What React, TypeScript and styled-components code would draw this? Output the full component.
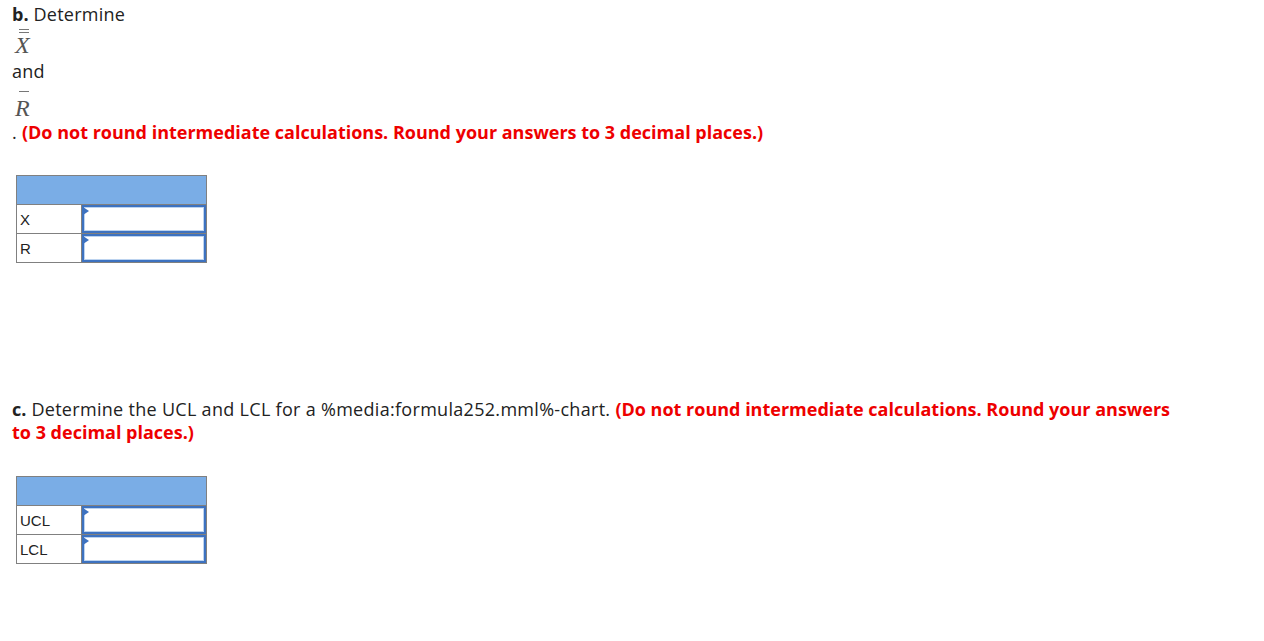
import styled, { createGlobalStyle } from "styled-components";

const GlobalStyle = createGlobalStyle`
    body {
        margin: 0;
        background: #fff;
        font-family: "Open Sans", Lato, sans-serif;
        color: #222;
    }
`;

const Page = styled.div`
    width: 1172px;
    padding: 0 0 0 12px;
`;

const Line = styled.div<{ $h: number }>`
    font-size: 18px;
    letter-spacing: 0.25px;
    line-height: ${(p) => p.$h}px;
    height: ${(p) => p.$h}px;
`;

const Part = styled.b`
    font-weight: 700;
    letter-spacing: 0;
`;

const Warn = styled.span`
    color: #ee0000;
    font-weight: 700;
    letter-spacing: 0;
`;

const MathLine = styled.div<{ $h: number; $pt: number }>`
    display: flex;
    align-items: flex-start;
    height: ${(p) => p.$h}px;
    padding-top: ${(p) => p.$pt}px;
    box-sizing: border-box;
`;

const MathStack = styled.div`
    display: flex;
    flex-direction: column;
    align-items: center;
    margin-left: 3px;
`;

const Bar = styled.div<{ $double?: boolean }>`
    width: 10px;
    margin-left: 4px;
    height: ${(p) => (p.$double ? "4px" : "1px")};
    box-sizing: border-box;
    border-top: ${(p) => (p.$double ? "4px double #777" : "1px solid #777")};
`;

const Glyph = styled.div<{ $gap: number }>`
    margin-top: ${(p) => p.$gap}px;
    font-family: "Liberation Serif", "DejaVu Serif", serif;
    font-style: italic;
    font-size: 24px;
    line-height: 22px;
    color: #555;
`;

const Para = styled.p`
    margin: 135px 0 0;
    font-size: 18px;
    letter-spacing: 0.3px;
    line-height: 23px;
`;

const Grid = styled.table<{ $mt: number }>`
    margin: ${(p) => p.$mt}px 0 0 4px;
    border-collapse: collapse;
    width: 191px;
    font-family: "Liberation Sans", Arial, sans-serif;
    font-size: 15px;
    color: #222;
    td, th {
        border: 1px solid #808080;
        padding: 0;
    }
`;

const Head = styled.th`
    height: 28px;
    background: #7aade6;
`;

const Label = styled.td`
    width: 61px;
    height: 28px;
    padding-left: 3px !important;
`;

const Field = styled.td`
    position: relative;
`;

const Input = styled.div`
    height: 28px;
    border: 2px solid #3d72c0;
    box-shadow: inset 0 0 0 1px #bcd3ef;
    box-sizing: border-box;
    background: #fff;
`;

const Flag = styled.span`
    position: absolute;
    left: 1px;
    top: 2px;
    width: 0;
    height: 0;
    border-top: 4px solid transparent;
    border-bottom: 4px solid transparent;
    border-left: 6px solid #3d72c0;
`;

const AnswerTable = ({ rows, mt }: { rows: string[]; mt: number }) => (
    <Grid $mt={mt}>
        <thead>
            <tr>
                <Head colSpan={2} />
            </tr>
        </thead>
        <tbody>
            {rows.map((r) => (
                <tr key={r}>
                    <Label>{r}</Label>
                    <Field>
                        <Input />
                        <Flag />
                    </Field>
                </tr>
            ))}
        </tbody>
    </Grid>
);

const App = () => {
    return (
        <Page>
            <GlobalStyle />
            <Line $h={28}>
                <Part>b.</Part> <span>Determine</span>
            </Line>
            <MathLine $h={30} $pt={1}>
                <MathStack>
                    <Bar $double />
                    <Glyph $gap={1}>X</Glyph>
                </MathStack>
            </MathLine>
            <Line $h={26}>and</Line>
            <MathLine $h={36} $pt={7}>
                <MathStack>
                    <Bar />
                    <Glyph $gap={5}>R</Glyph>
                </MathStack>
            </MathLine>
            <Line $h={24}>
                <span>.</span> <Warn>(Do not round intermediate calculations. Round your answers to 3 decimal places.)</Warn>
            </Line>
            <AnswerTable rows={["X", "R"]} mt={31} />
            <Para>
                <Part>c.</Part> <span>Determine the UCL and LCL for a %media:formula252.mml%-chart.</span>{" "}
                <Warn>(Do not round intermediate calculations. Round your answers to 3 decimal places.)</Warn>
            </Para>
            <AnswerTable rows={["UCL", "LCL"]} mt={32} />
        </Page>
    );
};

export default App;
